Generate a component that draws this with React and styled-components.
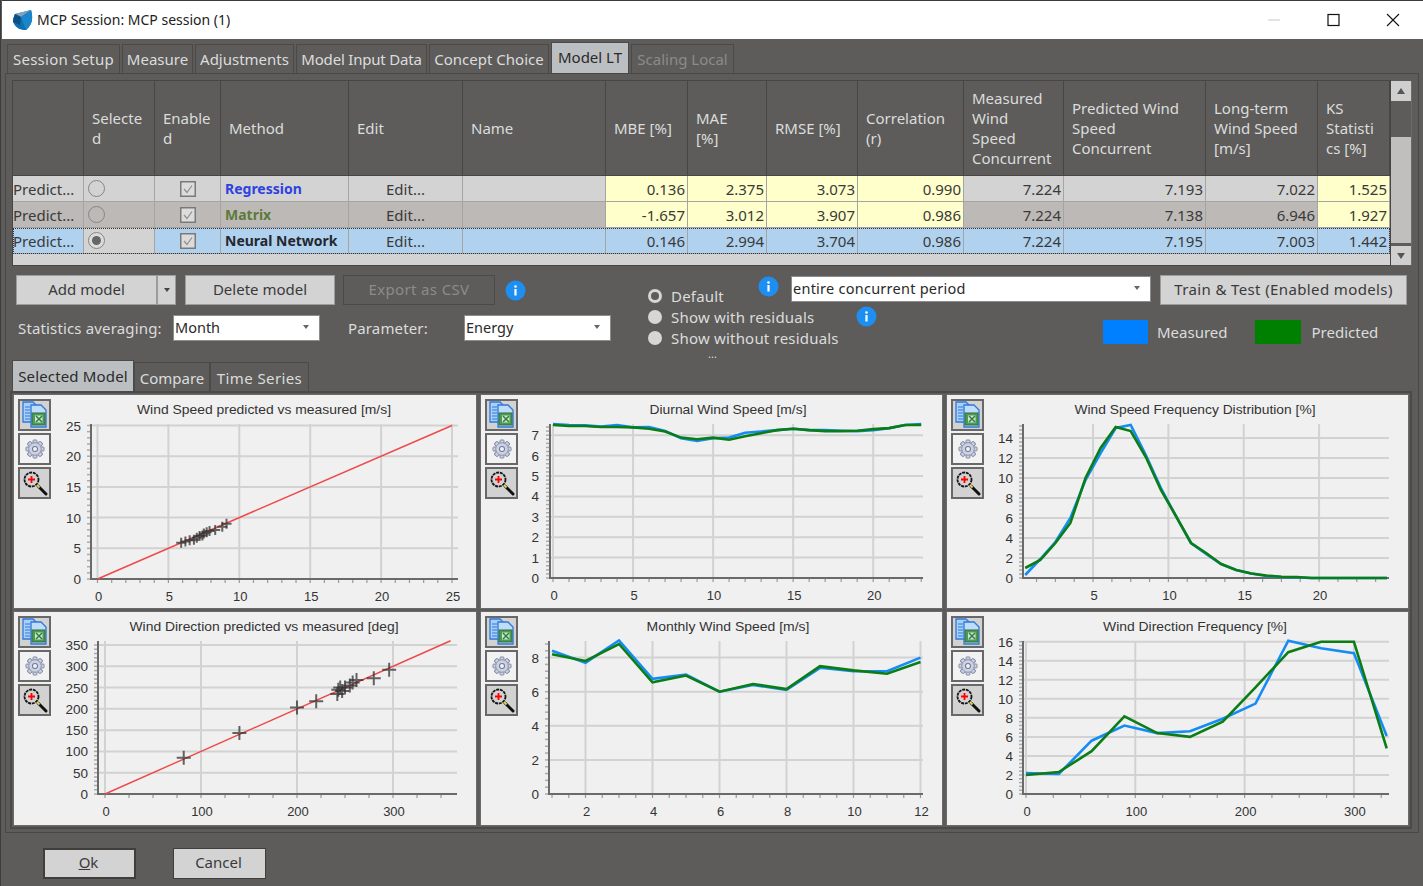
import React from 'react';
import styled, { createGlobalStyle } from 'styled-components';

const UI_FONT = '"Noto Sans", "Open Sans", sans-serif';
const CHART_FONT = '"Liberation Sans", Arial, sans-serif';

const GlobalStyle = createGlobalStyle`
	html, body {
		margin: 0;
		padding: 0;
		background: #5d5c5a;
	}
	* {
		box-sizing: border-box;
	}
`;

const Window = styled.div`
	width: 1423px;
	height: 886px;
	display: flex;
	flex-direction: column;
	background: #5d5c5a;
	border-left: 1px solid #3c3c3c;
	font-family: ${UI_FONT};
	font-size: 15px;
	color: #dcdcdc;
	overflow: hidden;
`;

const TitleBar = styled.div`
	height: 39px;
	flex: none;
	display: flex;
	align-items: center;
	padding-left: 10px;
	background: #fff;
	border-top: 1px solid #3a3a3a;
	margin-left: 1px;
	color: #222;
`;

const TitleText = styled.span`
	margin: 0 0 2px 3px;
	font-size: 14px;
`;

const WinControls = styled.div`
	margin-left: auto;
	display: flex;
	align-items: center;
	padding-right: 1px;
`;

const WinButton = styled.svg`
	display: block;
	width: 59px;
	height: 14px;
`;

const TabRow = styled.div`
	height: 34px;
	flex: none;
	display: flex;
	align-items: flex-end;
	padding-left: ${(p) => p.$left || 6}px;
	gap: ${(p) => p.$gap ?? 2}px;
`;

const Tab = styled.div`
	height: ${(p) => (p.$active ? 31 : 29)}px;
	width: ${(p) => p.$w}px;
	flex: none;
	display: flex;
	align-items: center;
	justify-content: center;
	padding-bottom: ${(p) => (p.$active ? 3 : 0)}px;
	background: ${(p) => (p.$active ? '#bcbfc2' : '#5d5c5a')};
	color: ${(p) => (p.$active ? '#2a2a2a' : p.$off ? '#8c8b89' : '#dcdcdc')};
	border: 1px solid #4b4a48;
	border-bottom: none;
	white-space: nowrap;
	letter-spacing: ${(p) => p.$ls || 0}px;
`;

const SubTab = styled(Tab)`
	padding-top: 2px;
`;

const Pane = styled.div`
	height: 760px;
	flex: none;
	margin: 0 4px;
	width: 1414px;
	border: 1px solid #494846;
	display: flex;
	flex-direction: column;
`;

const TableArea = styled.div`
	margin: 6px 0 0 6px;
	height: 186px;
	flex: none;
	display: flex;
`;

const TableFrame = styled.div`
	width: 1379px;
	flex: none;
	border: 1px solid #474644;
	background: #d3d3d3;
`;

const Row = styled.div`
	display: grid;
	grid-template-columns: 71px 71px 66px 128px 114px 143px 82px 79px 91px 106px 100px 142px 112px 72px;
	position: relative;
	${(p) => p.$focus && 'outline: 1px dotted #333; outline-offset: -1px;'}
`;

const HeadCell = styled.div`
	height: 95px;
	display: flex;
	align-items: center;
	padding-left: 8px;
	white-space: pre-line;
	line-height: 20px;
	background: #5d5c5a;
	border-right: 1px solid #474644;
	border-bottom: 1px solid #474644;
`;

const CELL_BG = { plain: '#d3d3d3', alt: '#bdb9b6', sel: '#b1d2ee', yellow: '#ffffcc' };

const Cell = styled.div`
	height: 26px;
	display: flex;
	align-items: center;
	justify-content: ${(p) => p.$justify || 'flex-start'};
	padding: 0 ${(p) => (p.$justify === 'flex-end' ? 2 : 0)}px 0 ${(p) => p.$pad ?? 0}px;
	background: ${(p) => CELL_BG[p.$bg]};
	border-right: 1px solid #a5a4a2;
	border-bottom: 1px solid #a5a4a2;
	color: #3a3a3a;
	white-space: nowrap;
	overflow: hidden;
`;

const MethodName = styled.span`
	color: ${(p) => p.$color};
	font-weight: 700;
	font-size: 14px;
`;

const RowRadio = styled.span`
	width: 17px;
	height: 17px;
	border-radius: 50%;
	border: 1.5px solid #858585;
	background: ${(p) => (p.$on ? '#dcdcdc' : 'transparent')};
	display: flex;
	align-items: center;
	justify-content: center;
	&::after {
		content: '';
		width: 9px;
		height: 9px;
		border-radius: 50%;
		background: ${(p) => (p.$on ? '#666' : 'transparent')};
	}
`;

const CheckIcon = styled.svg`
	display: block;
	width: 16px;
	height: 16px;
`;

const Scrollbar = styled.div`
	width: 21px;
	margin-top: 1px;
	height: 184px;
	flex: none;
	display: flex;
	flex-direction: column;
	background: #5d5c5a;
	border-right: 1px solid #6d6c6a;
`;

const ScrollBtn = styled.div`
	height: ${(p) => p.$h}px;
	flex: none;
	background: #cfcfcf;
	display: flex;
	align-items: center;
	justify-content: center;
	color: #444;
	margin-top: ${(p) => p.$top || 0}px;
	&::after {
		content: '';
		border-left: 4px solid transparent;
		border-right: 4px solid transparent;
		${(p) => (p.$down ? 'border-top: 6px solid #555;' : 'border-bottom: 6px solid #555;')}
	}
`;

const ScrollThumb = styled.div`
	height: 106px;
	flex: none;
	margin-top: 36px;
	background: #c0bfbd;
`;

const Controls = styled.div`
	height: 95px;
	flex: none;
	display: flex;
	padding-left: 10px;
`;

const LeftControls = styled.div`
	width: 632px;
	flex: none;
	padding-top: 9px;
`;

const ButtonRow = styled.div`
	display: flex;
	align-items: center;
	height: 30px;
`;

const Btn = styled.div`
	width: ${(p) => p.$w}px;
	height: 30px;
	flex: none;
	margin-left: ${(p) => p.$ml || 0}px;
	padding-bottom: 2px;
	display: flex;
	align-items: center;
	justify-content: center;
	background: ${(p) => (p.$off ? '#5d5c5a' : '#d3d3d3')};
	color: ${(p) => (p.$off ? '#8c8b89' : '#3a3a3a')};
	border: 1px solid ${(p) => (p.$off ? '#4b4a48' : '#9c9c9c')};
	white-space: nowrap;
	letter-spacing: ${(p) => p.$ls || 0}px;
`;

const DropBtn = styled(Btn)`
	padding-bottom: 0;
	&::after {
		content: '';
		border-left: 3.5px solid transparent;
		border-right: 3.5px solid transparent;
		border-top: 4px solid #444;
	}
`;

const InfoWrap = styled.svg`
	display: block;
	width: 21px;
	height: 21px;
	flex: none;
	margin-left: ${(p) => p.$ml || 0}px;
	${(p) => p.$auto && 'margin-left: auto;'}
	${(p) => p.$lift && `transform: translateY(-${p.$lift}px);`}
`;

const FilterRow = styled.div`
	display: flex;
	align-items: center;
	height: 26px;
	margin-top: 10px;
	padding-left: 2px;
`;

const FieldLabel = styled.span`
	width: ${(p) => p.$w}px;
	flex: none;
	margin-left: ${(p) => p.$ml || 0}px;
	white-space: nowrap;
	letter-spacing: 0.15px;
`;

const Combo = styled.div`
	width: ${(p) => p.$w}px;
	height: 26px;
	flex: none;
	display: flex;
	align-items: center;
	padding: 0 10px 2px 1px;
	background: #fff;
	border: 1px solid #8c8c8c;
	color: #2a2a2a;
	font-size: 14.5px;
	letter-spacing: ${(p) => p.$ls || 0}px;
	white-space: nowrap;
	&::after {
		content: '';
		margin-left: auto;
		border-left: 3.5px solid transparent;
		border-right: 3.5px solid transparent;
		border-top: 4px solid #666;
	}
`;

const RightControls = styled.div`
	width: 759px;
	flex: none;
	padding-top: 9px;
	display: grid;
	grid-template-columns: 143px 86px 530px;
	grid-template-rows: 31px 21.5px 21.5px 12px;
`;

const RadioRow = styled.div`
	grid-column: 1 / 3;
	grid-row: ${(p) => p.$row};
	display: flex;
	align-items: center;
	height: ${(p) => p.$h || 21.5}px;
	align-self: end;
	padding-right: ${(p) => p.$pr || 0}px;
	white-space: nowrap;
	letter-spacing: 0.2px;
`;

const RadioDot = styled.span`
	width: 14px;
	height: 14px;
	flex: none;
	margin-right: 9px;
	border-radius: 50%;
	background: ${(p) => (p.$ring ? '#5d5c5a' : '#d6d6d6')};
	border: ${(p) => (p.$ring ? 3 : 0)}px solid #d6d6d6;
`;

const Ellipsis = styled.div`
	grid-column: 1 / 3;
	grid-row: 4;
	padding-left: 60px;
	font-size: 11px;
	line-height: 9px;
`;

const ComboRow = styled.div`
	grid-column: 2 / 4;
	grid-row: 1;
	display: flex;
	align-items: flex-start;
	gap: 9px;
	padding-top: 1px;
`;

const TrainBtn = styled(Btn)`
	margin-top: -1px;
`;

const Legend = styled.div`
	grid-column: 3;
	grid-row: 2 / 4;
	padding: 14px 0 0 226px;
	display: flex;
	align-items: center;
	height: 38px;
`;

const Swatch = styled.span`
	width: ${(p) => p.$w}px;
	height: 24px;
	flex: none;
	background: ${(p) => p.$color};
`;

const LegendLabel = styled.span`
	margin: 0 ${(p) => p.$mr || 0}px 0 ${(p) => p.$ml}px;
	white-space: nowrap;
`;

const SubTabs = styled(TabRow)`
	height: 30px;
`;

const ChartFrame = styled.div`
	margin-left: 4px;
	width: 1402px;
	height: 438px;
	flex: none;
	padding: 2px;
	border: 2px solid #4b4a48;
	display: grid;
	grid-template-columns: 462px 461px 461px;
	grid-template-rows: 213px 213px;
	column-gap: 5px;
	row-gap: 4px;
`;

const ChartCell = styled.div`
	display: flex;
	background: #f0f0f0;
	box-shadow: 0 0 0 1px #6a6a6a;
`;

const ToolColumn = styled.div`
	width: 40px;
	flex: none;
	padding: 4px 0 0 4px;
	display: flex;
	flex-direction: column;
	gap: 2px;
`;

const ToolBtn = styled.div`
	width: 33px;
	height: 32px;
	display: flex;
	align-items: center;
	justify-content: center;
	background: ${(p) => (p.$light ? '#f2f2f2' : '#d2d2d2')};
	border: 2px solid #686868;
`;

const ToolIcon = styled.svg`
	display: block;
	width: ${(p) => p.$size || 28}px;
	height: ${(p) => p.$size || 28}px;
`;

const ChartSvg = styled.svg`
	display: block;
	flex: none;
	font-family: ${CHART_FONT};
`;

const Footer = styled.div`
	flex: 1;
	display: flex;
	align-items: flex-start;
	padding: 15px 0 0 42px;
	gap: 37px;
`;

const DialogBtn = styled.div`
	width: ${(p) => p.$w}px;
	height: 31px;
	padding: 0 2px 3px 0;
	display: flex;
	align-items: center;
	justify-content: center;
	background: #d3d3d3;
	color: #3a3a3a;
	border: ${(p) => (p.$primary ? '2px solid #3f3e3c' : '1px solid #3f3e3c')};
`;

const Underline = styled.span`
	text-decoration: underline;
`;

const topTabs = [
	['Session Setup', 113, 0.25],
	['Measure', 71, 0],
	['Adjustments', 99, 0],
	['Model Input Data', 131, -0.2],
	['Concept Choice', 120, 0],
];

const columns = [
	'',
	'Selecte\nd',
	'Enable\nd',
	'Method',
	'Edit',
	'Name',
	'MBE [%]',
	'MAE\n[%]',
	'RMSE [%]',
	'Correlation\n(r)',
	'Measured\nWind\nSpeed\nConcurrent',
	'Predicted Wind\nSpeed\nConcurrent',
	'Long-term\nWind Speed\n[m/s]',
	'KS\nStatisti\ncs [%]',
];

const models = [
	{
		name: 'Regression',
		color: '#2f42e0',
		bg: 'plain',
		stats: ['0.136', '2.375', '3.073', '0.990'],
		speeds: ['7.224', '7.193', '7.022'],
		ks: '1.525',
	},
	{
		name: 'Matrix',
		color: '#5c7a3c',
		bg: 'alt',
		stats: ['-1.657', '3.012', '3.907', '0.986'],
		speeds: ['7.224', '7.138', '6.946'],
		ks: '1.927',
	},
	{
		name: 'Neural Network',
		color: '#25272e',
		bg: 'sel',
		selected: true,
		stats: ['0.146', '2.994', '3.704', '0.986'],
		speeds: ['7.224', '7.195', '7.003'],
		ks: '1.442',
	},
];

function ModelRow({ model }) {
	const { bg, selected } = model;
	const statBg = selected ? 'sel' : 'yellow';
	return (
		<Row $focus={selected}>
			<Cell $bg={bg}>Predict...</Cell>
			<Cell $bg={selected ? 'plain' : bg} $pad={4}>
				<RowRadio $on={selected} />
			</Cell>
			<Cell $bg={bg} $justify="center">
				<CheckIcon viewBox="0 0 16 16">
					<rect x="0.75" y="0.75" width="14.5" height="14.5" fill="#dcdcdc" stroke="#7a7a7a" strokeWidth="1.5" />
					<path d="M4 8 L7 11.5 L12 4.5" fill="none" stroke="#8f8f8f" strokeWidth="1.2" />
				</CheckIcon>
			</Cell>
			<Cell $bg={bg} $pad={4}>
				<MethodName $color={model.color}>{model.name}</MethodName>
			</Cell>
			<Cell $bg={bg} $justify="center">Edit...</Cell>
			<Cell $bg={bg} />
			{model.stats.map((v, i) => (
				<Cell key={i} $bg={statBg} $justify="flex-end">{v}</Cell>
			))}
			{model.speeds.map((v, i) => (
				<Cell key={i} $bg={bg} $justify="flex-end">{v}</Cell>
			))}
			<Cell $bg={statBg} $justify="flex-end">{model.ks}</Cell>
		</Row>
	);
}

function InfoIcon(props) {
	return (
		<InfoWrap viewBox="0 0 21 21" {...props}>
			<circle cx="10.5" cy="10.5" r="10" fill="#1e8ff2" />
			<circle cx="10.5" cy="6.5" r="1.3" fill="#fff" />
			<rect x="9.4" y="9" width="2.2" height="6.5" fill="#fff" />
		</InfoWrap>
	);
}

function ExcelIcon() {
	return (
		<ToolIcon viewBox="0 0 28 28">
			<path d="M2 1 H12 L16 5 V21 H2 Z" fill="#a9d0f8" stroke="#2f78d8" strokeWidth="1.3" />
			<path d="M4 6 H9 M4 9 H9 M4 12 H9 M4 15 H9 M4 18 H9" stroke="#2f78d8" strokeWidth="1" />
			<path d="M10 4 H20 L25 9 V26 H10 Z" fill="#bfdcfb" stroke="#2f78d8" strokeWidth="1.3" />
			<rect x="11" y="12" width="13" height="12" fill="#4d9a58" stroke="#2f6f3a" strokeWidth="1" />
			<rect x="14" y="14.5" width="7.5" height="7" fill="#cfe6cf" />
			<path d="M15 15 L21 21 M21 15 L15 21" stroke="#2f7f42" strokeWidth="1.5" />
		</ToolIcon>
	);
}

const GEAR_TEETH = [0, 45, 90, 135, 180, 225, 270, 315];

function GearIcon() {
	return (
		<ToolIcon $size={22} viewBox="0 0 28 28">
			{GEAR_TEETH.map((a) => (
				<rect key={a} x="11.5" y="2.5" width="5" height="5" rx="1" fill="#cdd2e2" stroke="#7d86a2" strokeWidth="1.2" transform={`rotate(${a} 14 14)`} />
			))}
			<circle cx="14" cy="14" r="8" fill="#cdd2e2" stroke="#7d86a2" strokeWidth="1" />
			<circle cx="14" cy="14" r="3.2" fill="#f2f2f2" stroke="#6f7896" strokeWidth="1.3" />
		</ToolIcon>
	);
}

function ZoomIcon() {
	return (
		<ToolIcon viewBox="0 0 28 28">
			<path d="M17 17 L25 25" stroke="#111" strokeWidth="3" strokeLinecap="round" />
			<path d="M15.5 15.5 L18.5 18.5" stroke="#e3d94a" strokeWidth="1.8" />
			<circle cx="10.5" cy="10.5" r="7" fill="#d2d2d2" stroke="#151515" strokeWidth="1.8" strokeDasharray="3 0.8" />
			<path d="M7 10.5 H14 M10.5 7 V14" stroke="#f00" strokeWidth="1.8" />
		</ToolIcon>
	);
}

const range = (from, to, step) => {
	const out = [];
	for (let v = from; v <= to + 1e-6; v += step) out.push(+v.toFixed(4));
	return out;
};

function PlotChart({ chart, width, left, top }) {
	const { title, titleX, axisX, axisY, right, plotTop, x0, xs, y0, ys, xMajor, xMinor, yMajor, yMinor, xMax, yMax, labelRight, xStart = 0 } = chart;
	const px = (v) => x0 + v * xs;
	const py = (v) => y0 - v * ys;
	const line = (pts) => pts.map(([a, b]) => `${px(a).toFixed(1)},${py(b).toFixed(1)}`).join(' ');
	return (
		<ChartSvg width={width} height={213} viewBox={`${left} ${top} ${width} 213`}>
			<text x={titleX} y={top + 19} textAnchor="middle" fontSize="12.6" fill="#333" textLength={chart.titleW} lengthAdjust="spacingAndGlyphs">{title}</text>
			{yMajor.map((v) => (
				<line key={v} x1={axisX} x2={right} y1={py(v)} y2={py(v)} stroke="#d2d2d2" strokeWidth="2" />
			))}
			{xMajor.map((v) => (
				<line key={v} x1={px(v)} x2={px(v)} y1={plotTop} y2={axisY} stroke="#d2d2d2" strokeWidth="2" />
			))}
			{range(0, yMax, yMinor).map((v) => (
				<line key={v} x1={axisX - 4} x2={axisX} y1={py(v)} y2={py(v)} stroke="#aaa" strokeWidth="1.5" />
			))}
			{range(xStart, xMax, xMinor).map((v) => (
				<line key={v} x1={px(v)} x2={px(v)} y1={axisY} y2={axisY + 4} stroke="#999" strokeWidth="1.2" />
			))}
			<line x1={axisX} x2={axisX} y1={plotTop} y2={axisY + 1} stroke="#6a6a6a" strokeWidth="2" />
			<line x1={axisX} x2={right} y1={axisY} y2={axisY} stroke="#6a6a6a" strokeWidth="2" />
			{yMajor.map((v) => (
				<text key={v} x={labelRight} y={py(v) + 5} textAnchor="end" fontSize="13.5" fill="#333">{v}</text>
			))}
			{xMajor.map((v) => (
				<text key={v} x={px(v) + 1} y={axisY + 22} textAnchor="middle" fontSize="13" fill="#333">{v}</text>
			))}
			{chart.identity && (
				<>
					<line x1={px(0)} y1={py(0)} x2={px(chart.identity)} y2={py(chart.identity)} stroke="#f04848" strokeWidth="1.4" />
					{chart.points.map(([a, b], i) => (
						<path
							key={i}
							d={`M${px(a) - chart.arm} ${py(b)} H${px(a) + chart.arm} M${px(a)} ${py(b) - chart.arm} V${py(b) + chart.arm}`}
							stroke="#333"
							strokeOpacity="0.75"
							strokeWidth="2"
							fill="none"
						/>
					))}
				</>
			)}
			{chart.blue && <polyline points={line(chart.blue)} fill="none" stroke="#148cf5" strokeWidth="2.6" />}
			{chart.green && <polyline points={line(chart.green)} fill="none" stroke="#0b7d14" strokeWidth="2.6" />}
		</ChartSvg>
	);
}

const series = (xStart, step, vals) => vals.map((v, i) => [xStart + i * step, v]);

const charts = [
	{
		title: 'Wind Speed predicted vs measured [m/s]', titleX: 264, titleW: 254, left: 54, top: 395, width: 422,
		axisX: 91, axisY: 579, right: 458, plotTop: 424,
		x0: 97.5, xs: 14.18, y0: 579, ys: 6.14, labelRight: 81,
		xMajor: range(0, 25, 5), xMinor: 1, xMax: 25, yMajor: range(0, 25, 5), yMinor: 1, yMax: 25,
		identity: 25, arm: 5,
		points: [[5.9, 5.9], [6.2, 6.1], [6.5, 6.3], [6.8, 6.4], [7, 6.7], [7.2, 7], [7.4, 7.1], [7.5, 7.4], [7.7, 7.6], [7.9, 7.8], [8.3, 8], [8.8, 8.5], [9.1, 9]],
	},
	{
		title: 'Diurnal Wind Speed [m/s]', titleX: 728, titleW: 157, left: 521, top: 395, width: 421,
		axisX: 550, axisY: 578, right: 923, plotTop: 424,
		x0: 553, xs: 16.01, y0: 578, ys: 20.4, labelRight: 539,
		xMajor: range(0, 20, 5), xMinor: 1, xMax: 23, yMajor: range(0, 7, 1), yMinor: 0.2, yMax: 7.4,
		blue: series(0, 1, [7.55, 7.5, 7.48, 7.42, 7.5, 7.38, 7.4, 7.2, 6.85, 6.72, 6.85, 6.88, 7.12, 7.18, 7.25, 7.32, 7.25, 7.25, 7.22, 7.2, 7.25, 7.35, 7.5, 7.55]),
		green: series(0, 1, [7.5, 7.45, 7.45, 7.4, 7.4, 7.38, 7.32, 7.18, 6.88, 6.8, 6.88, 6.78, 6.95, 7.1, 7.25, 7.32, 7.25, 7.2, 7.2, 7.22, 7.3, 7.35, 7.5, 7.5]),
	},
	{
		title: 'Wind Speed Frequency Distribution [%]', titleX: 1195, titleW: 241, left: 987, top: 395, width: 421,
		axisX: 1023, axisY: 578, right: 1389, plotTop: 424,
		x0: 1017.7, xs: 15.07, y0: 578, ys: 10, labelRight: 1013, xStart: 1.25,
		xMajor: range(5, 20, 5), xMinor: 1.25, xMax: 24, yMajor: range(0, 14, 2), yMinor: 0.4, yMax: 15.2,
		blue: series(0.5, 1, [0.3, 1.9, 3.6, 6, 9.8, 12.5, 15, 15.3, 12.3, 9, 6.2, 3.5, 2.4, 1.4, 0.8, 0.45, 0.2, 0.1, 0.05, 0, 0, 0, 0, 0, 0]),
		green: series(0.5, 1, [1, 1.8, 3.5, 5.5, 10, 13, 15.1, 14.7, 12.1, 8.8, 6.2, 3.5, 2.5, 1.4, 0.8, 0.45, 0.25, 0.12, 0.1, 0, 0, 0, 0, 0, 0]),
	},
	{
		title: 'Wind Direction predicted vs measured [deg]', titleX: 264, titleW: 269, left: 54, top: 612, width: 422,
		axisX: 98, axisY: 794, right: 457, plotTop: 641,
		x0: 105, xs: 0.96, y0: 794, ys: 0.4257, labelRight: 88,
		xMajor: range(0, 300, 100), xMinor: 25, xMax: 350, yMajor: range(0, 350, 50), yMinor: 10, yMax: 350,
		identity: 360, arm: 7,
		points: [[82, 85], [140, 143], [200, 203], [220, 218], [242, 235], [243, 245], [245, 250], [247, 242], [250, 250], [255, 255], [258, 262], [262, 268], [280, 272], [296, 292]],
	},
	{
		title: 'Monthly Wind Speed [m/s]', titleX: 728, titleW: 163, left: 521, top: 612, width: 421,
		axisX: 549, axisY: 794, right: 923, plotTop: 641,
		x0: 518.5, xs: 33.5, y0: 794, ys: 17.05, labelRight: 539, xStart: 1,
		xMajor: range(2, 12, 2), xMinor: 0.5, xMax: 12, yMajor: range(0, 8, 2), yMinor: 0.4, yMax: 8.8,
		blue: series(1, 1, [8.4, 7.7, 9, 6.75, 7, 6, 6.4, 6.1, 7.4, 7.2, 7.2, 8]),
		green: series(1, 1, [8.2, 7.8, 8.8, 6.55, 6.95, 6, 6.45, 6.15, 7.5, 7.25, 7.05, 7.75]),
	},
	{
		title: 'Wind Direction Frequency [%]', titleX: 1195, titleW: 184, left: 987, top: 612, width: 421,
		axisX: 1023, axisY: 794, right: 1389, plotTop: 641,
		x0: 1026, xs: 1.093, y0: 794, ys: 9.52, labelRight: 1013,
		xMajor: range(0, 300, 100), xMinor: 25, xMax: 330, yMajor: range(0, 16, 2), yMinor: 0.4, yMax: 16,
		blue: series(0, 30, [2.2, 2.1, 5.6, 7.2, 6.4, 6.6, 7.9, 9.5, 16.1, 15.3, 14.8, 6.1]),
		green: series(0, 30, [2, 2.3, 4.5, 8.15, 6.4, 6, 7.6, 11.2, 14.9, 16, 16, 4.8]),
	},
];

export default function App() {
	return (
		<Window>
			<GlobalStyle />
			<TitleBar>
				<svg width="22" height="22" viewBox="0 0 22 22">
					<path d="M3 5 L19 1 C21 8 21 15 14 21 C9 21 4 20 1 13 C1 10 2 7 3 5 Z" fill="#0f6fb0" />
					<path d="M3 5 L19 1 L9 8 Z" fill="#7fa2bd" />
					<path d="M9 8 L19 1 C21 8 21 15 14 21 Z" fill="#1b86c9" />
					<path d="M3 5 L9 8 L8 16 L1 13 C1 10 2 7 3 5 Z" fill="#0b4f86" />
				</svg>
				<TitleText>MCP Session: MCP session (1)</TitleText>
				<WinControls>
					<WinButton viewBox="0 0 59 14">
						<path d="M23 7 H35" stroke="#c8c8c8" strokeWidth="1" />
					</WinButton>
					<WinButton viewBox="0 0 59 14">
						<rect x="24" y="1.5" width="11" height="11" fill="none" stroke="#111" strokeWidth="1.2" />
					</WinButton>
					<WinButton viewBox="0 0 59 14">
						<path d="M24 1 L36 13 M36 1 L24 13" stroke="#111" strokeWidth="1.1" />
					</WinButton>
				</WinControls>
			</TitleBar>
			<TabRow>
				{topTabs.map(([label, w, ls]) => (
					<Tab key={label} $w={w} $ls={ls}>{label}</Tab>
				))}
				<Tab $w={78} $active>Model LT</Tab>
				<Tab $w={103} $off>Scaling Local</Tab>
			</TabRow>
			<Pane>
				<TableArea>
					<TableFrame>
						<Row>
							{columns.map((c, i) => (
								<HeadCell key={i}>{c}</HeadCell>
							))}
						</Row>
						{models.map((m) => (
							<ModelRow key={m.name} model={m} />
						))}
					</TableFrame>
					<Scrollbar>
						<ScrollBtn $h={20} />
						<ScrollThumb />
						<ScrollBtn $h={19} $top={3} $down />
					</Scrollbar>
				</TableArea>
				<Controls>
					<LeftControls>
						<ButtonRow>
							<Btn $w={141}>Add model</Btn>
							<DropBtn $w={19} />
							<Btn $w={150} $ml={9}>Delete model</Btn>
							<Btn $w={152} $ml={8} $off $ls={0.35}>Export as CSV</Btn>
							<InfoIcon $ml={10} />
						</ButtonRow>
						<FilterRow>
							<FieldLabel $w={155}>Statistics averaging:</FieldLabel>
							<Combo $w={147}>Month</Combo>
							<FieldLabel $w={116} $ml={28}>Parameter:</FieldLabel>
							<Combo $w={147}>Energy</Combo>
						</FilterRow>
					</LeftControls>
					<RightControls>
						<RadioRow $row={1} $h={21} $pr={98}>
							<RadioDot $ring />
							Default
							<InfoIcon $auto $lift={9} />
						</RadioRow>
						<ComboRow>
							<Combo $w={360} $ls={0.25}>entire concurrent period</Combo>
							<TrainBtn $w={247} $ls={0.38}>Train &amp; Test (Enabled models)</TrainBtn>
						</ComboRow>
						<RadioRow $row={2}>
							<RadioDot />
							Show with residuals
							<InfoIcon $auto />
						</RadioRow>
						<RadioRow $row={3}>
							<RadioDot />
							Show without residuals
						</RadioRow>
						<Legend>
							<Swatch $w={45} $color="#0080ff" />
							<LegendLabel $ml={9} $mr={27}>Measured</LegendLabel>
							<Swatch $w={46} $color="#008000" />
							<LegendLabel $ml={11}>Predicted</LegendLabel>
						</Legend>
						<Ellipsis>...</Ellipsis>
					</RightControls>
				</Controls>
				<SubTabs $left={6} $gap={0}>
					<SubTab $w={122} $active $ls={0.15}>Selected Model</SubTab>
					<SubTab $w={76}>Compare</SubTab>
					<SubTab $w={99} $ls={0.4}>Time Series</SubTab>
				</SubTabs>
				<ChartFrame>
					{charts.map((c) => (
						<ChartCell key={c.title}>
							<ToolColumn>
								<ToolBtn><ExcelIcon /></ToolBtn>
								<ToolBtn $light><GearIcon /></ToolBtn>
								<ToolBtn><ZoomIcon /></ToolBtn>
							</ToolColumn>
							<PlotChart chart={c} width={c.width} left={c.left} top={c.top} />
						</ChartCell>
					))}
				</ChartFrame>
			</Pane>
			<Footer>
				<DialogBtn $w={93} $primary><span><Underline>O</Underline>k</span></DialogBtn>
				<DialogBtn $w={93}>Cancel</DialogBtn>
			</Footer>
		</Window>
	);
}
